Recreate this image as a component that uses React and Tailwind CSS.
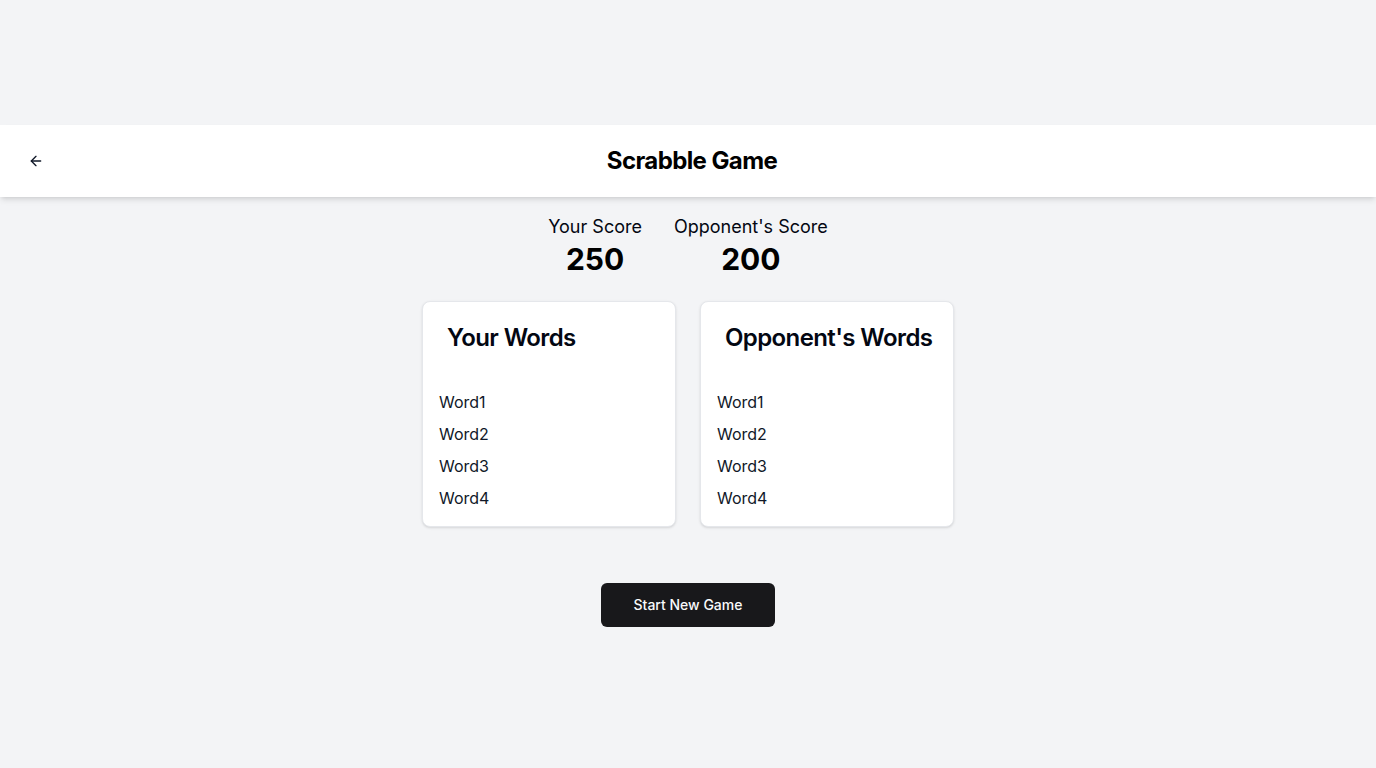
import React from "react";
import { ArrowLeft } from "lucide-react";

function WordCard({ title, words }) {
  return (
    <div className="w-[254px] rounded-lg border border-gray-200 bg-white text-gray-950 shadow-sm">
      <div className="flex flex-col p-6">
        <h3 className="whitespace-nowrap text-2xl font-semibold leading-none tracking-tight">{title}</h3>
      </div>
      <div className="flex flex-col gap-2 p-4">
        {words.map((w) => (
          <div key={w} className="text-base leading-6 text-gray-900">{w}</div>
        ))}
      </div>
    </div>
  );
}

export default function App() {
  const words = ["Word1", "Word2", "Word3", "Word4"];
  return (
    <div
      className="min-h-screen bg-gray-100 pt-[125px]"
      style={{ fontFamily: "Inter, 'Noto Sans', sans-serif" }}
    >
      <header className="flex h-[72px] items-center bg-white px-4 shadow-md">
        <button className="flex h-10 w-10 items-center justify-center text-gray-900">
          <ArrowLeft size={16} strokeWidth={2} />
        </button>
        <h1 className="flex-1 text-center text-2xl font-bold tracking-tight text-black">
          Scrabble Game
        </h1>
        <div className="w-[32px]" />
      </header>

      <div className="mt-4 flex justify-center gap-8">
        <div className="flex flex-col items-center">
          <div className="text-lg leading-7 text-gray-950">Your Score</div>
          <div className="text-3xl font-bold leading-9 text-black">250</div>
        </div>
        <div className="flex flex-col items-center">
          <div className="text-lg leading-7 text-gray-950">Opponent's Score</div>
          <div className="text-3xl font-bold leading-9 text-black">200</div>
        </div>
      </div>

      <div className="mt-6 flex justify-center gap-6">
        <WordCard title="Your Words" words={words} />
        <WordCard title="Opponent's Words" words={words} />
      </div>

      <div className="mt-14 flex justify-center">
        <button className="h-11 rounded-md bg-[#18181b] px-[33px] text-sm font-medium text-gray-50">
          Start New Game
        </button>
      </div>
    </div>
  );
}
